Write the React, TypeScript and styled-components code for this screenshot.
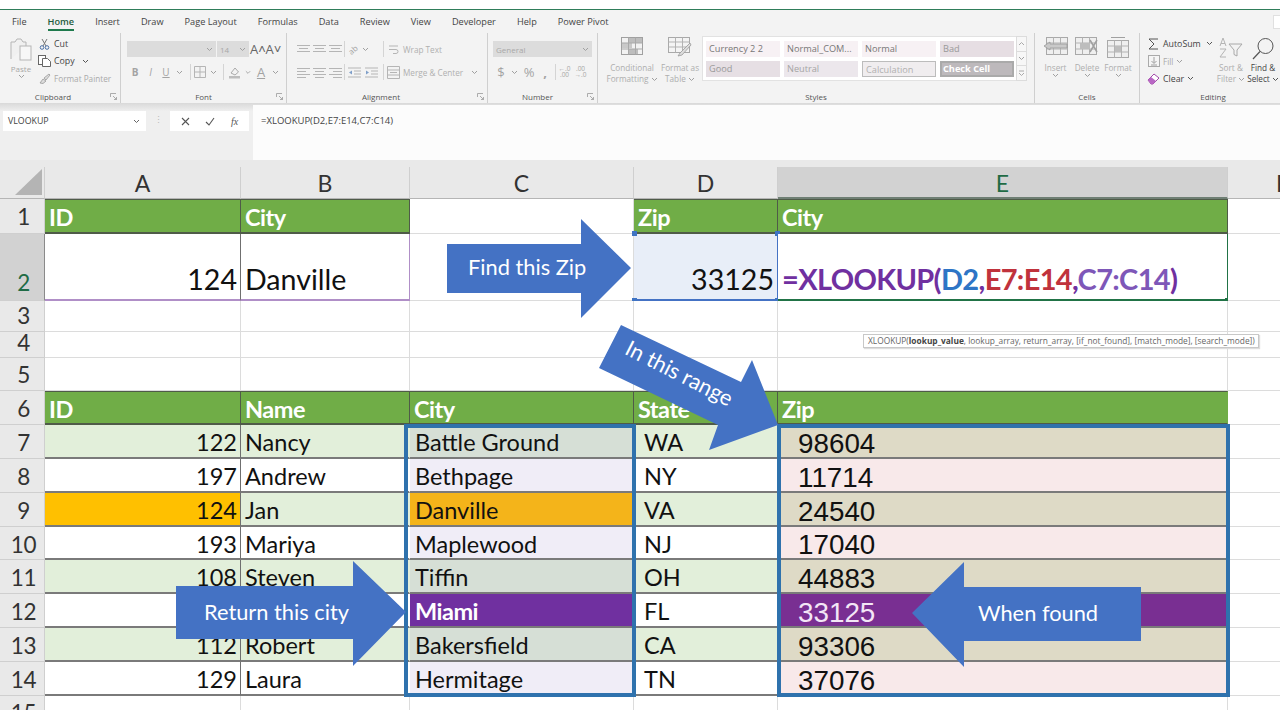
import React from "react";
import styled, { createGlobalStyle } from "styled-components";

const UI_FONT = `"Open Sans", "Liberation Sans", sans-serif`;
const SHEET_FONT = `Lato, "Liberation Sans", sans-serif`;
const ARIAL = `"Liberation Sans", Arial, sans-serif`;

const GlobalStyle = createGlobalStyle`
  html, body { margin: 0; padding: 0; background: #fff; }
  * { box-sizing: border-box; }
`;

const Page = styled.div`
  width: 1280px;
  height: 720px;
  overflow: hidden;
  background: #fff;
  font-family: ${UI_FONT};
`;

const TopStrip = styled.div`
  height: 9px;
  background: #fff;
  border-bottom: 1px solid #2f7d5a;
  box-sizing: content-box;
`;

/* ---------- ribbon ---------- */

const Ribbon = styled.div`
  height: 93px;
  background: #f3f3f3;
`;

const Tabs = styled.div`
  height: 23px;
  display: flex;
  align-items: center;
  gap: 21px;
  padding-left: 12px;
  font-size: 9.2px;
  color: #444;
`;

const Tab = styled.span<{ $active?: boolean }>`
  position: relative;
  color: ${(p) => (p.$active ? "#1f5c3d" : "#444")};
  font-weight: ${(p) => (p.$active ? 600 : 400)};
  &::after {
    content: "";
    display: ${(p) => (p.$active ? "block" : "none")};
    position: absolute;
    left: 0;
    right: 0;
    bottom: -3px;
    height: 2px;
    background: #1f7a4d;
  }
`;

const ShareStub = styled.span`
  margin-left: auto;
  width: 7px;
  height: 14px;
  background: #fff;
  border: 1px solid #e0e0e0;
  border-right: none;
`;

const Groups = styled.div`
  height: 70px;
  display: flex;
`;

const Group = styled.div<{ $w: number }>`
  width: ${(p) => p.$w}px;
  display: flex;
  flex-direction: column;
  border-right: 1px solid #cfcfcf;
  &:last-child { border-right: none; }
`;

const GroupBody = styled.div<{ $pad?: number }>`
  flex: 1;
  display: flex;
  padding-left: ${(p) => p.$pad ?? 0}px;
`;

const GroupLabel = styled.div<{ $shift?: number }>`
  position: relative;
  height: 13px;
  line-height: 13px;
  text-align: center;
  font-size: 8px;
  font-weight: 500;
  color: #555;
  padding-right: ${(p) => (p.$shift ?? 0) * 2}px;
  padding-left: ${(p) => (p.$shift ?? 0) < 0 ? (p.$shift ?? 0) * -2 : 0}px;
`;

const Launcher = styled.svg`
  position: absolute;
  right: 3px;
  top: 3px;
`;

const Rows = styled.div`
  display: flex;
  flex-direction: column;
  padding-top: 8px;
  gap: 7px;
`;

const ToolRow = styled.div`
  height: 16px;
  display: flex;
  align-items: center;
`;

const Slot = styled.span<{ $w: number; $dark?: boolean; $big?: boolean }>`
  width: ${(p) => p.$w}px;
  height: 16px;
  flex: none;
  display: flex;
  align-items: center;
  justify-content: center;
  font-size: ${(p) => (p.$big ? 13 : 10)}px;
  color: ${(p) => (p.$dark ? "#666" : "#a3a3a3")};
`;

const SlantText = styled.span`
  display: block;
  font-size: 8px;
  transform: rotate(-40deg);
  color: #a3a3a3;
`;

const DecimalText = styled.span`
  display: block;
  font-size: 6.5px;
  line-height: 6.5px;
  text-align: center;
  color: #a8a8a8;
  white-space: nowrap;
`;

const Sep = styled.span`
  width: 1px;
  height: 16px;
  flex: none;
  background: #d4d4d4;
`;

const Combo = styled.span<{ $w: number }>`
  width: ${(p) => p.$w}px;
  height: 16px;
  flex: none;
  display: flex;
  align-items: center;
  justify-content: space-between;
  padding: 0 3px;
  background: #dcdcdc;
  font-size: 8px;
  color: #a8a8a8;
  margin-right: 1px;
`;

const ToolText = styled.span`
  font-size: 8.2px;
  color: #b0b0b0;
  white-space: nowrap;
`;

const PasteCol = styled.div`
  width: 26px;
  margin: 4px 4px 0 8px;
  display: flex;
  flex-direction: column;
  align-items: center;
  font-size: 8px;
  line-height: 11px;
  color: #a8a8a8;
  svg:first-child { margin-bottom: 2px; }
`;

const SmallStack = styled.div`
  display: flex;
  flex-direction: column;
  padding-top: 2px;
  gap: 0.5px;
`;

const EditingStack = styled(SmallStack)`
  width: 68px;
  flex: none;
`;

const SmallTool = styled.div`
  height: 17px;
  display: flex;
  align-items: center;
  gap: 3px;
  font-size: 8.8px;
  color: #444;
`;

const SmallIcon = styled.span`
  width: 13px;
  flex: none;
  display: flex;
  justify-content: center;
`;

const Muted = styled.span`
  font-size: 8.2px;
  color: #aaa;
`;

const BigButton = styled.div<{ $w: number; $dark?: boolean }>`
  width: ${(p) => p.$w}px;
  flex: none;
  padding-top: 4px;
  display: flex;
  flex-direction: column;
  align-items: center;
  font-size: 8.2px;
  line-height: 11px;
  white-space: nowrap;
  color: ${(p) => (p.$dark ? "#444" : "#aeaeae")};
`;

const BigIcon = styled.div`
  height: 25px;
  display: flex;
  align-items: flex-start;
`;

const Gallery = styled.div`
  margin: 3px 0 0 2px;
  width: 314px;
  height: 45px;
  padding: 4px 3px;
  background: #fff;
  border: 1px solid #e2e2e2;
  border-right: none;
  display: grid;
  grid-template-columns: repeat(4, 74px);
  column-gap: 4px;
  row-gap: 4px;
  grid-auto-rows: 16px;
`;

const StyleCell = styled.div<{ $bg: string; $color?: string; $boxed?: boolean; $strong?: boolean }>`
  background: ${(p) => p.$bg};
  color: ${(p) => p.$color ?? "#8b8b8b"};
  border: ${(p) => (p.$boxed ? "1px solid #bcbcbc" : "none")};
  outline: ${(p) => (p.$strong ? "2px solid #aaa" : "none")};
  outline-offset: -2px;
  font-size: 9.2px;
  font-weight: ${(p) => (p.$strong ? 700 : 400)};
  line-height: 16px;
  padding-left: 3px;
  white-space: nowrap;
  overflow: hidden;
`;

const GalleryScroll = styled.div`
  margin-top: 3px;
  width: 11px;
  height: 45px;
  border: 1px solid #dcdcdc;
  background: #f7f7f7;
  display: flex;
  flex-direction: column;
`;

const ScrollStep = styled.span`
  flex: 1;
  display: flex;
  align-items: center;
  justify-content: center;
  border-bottom: 1px solid #dcdcdc;
  &:last-child { border-bottom: none; }
`;

/* ---------- formula bar ---------- */

const FormulaBar = styled.div`
  height: 57px;
  display: flex;
  align-items: flex-start;
  background: linear-gradient(#d9d9d9 0, #ececec 7px, #efefef 8px);
  padding-top: 8px;
`;

const NameBox = styled.div`
  margin-left: 3px;
  width: 143px;
  height: 20px;
  background: #fff;
  display: flex;
  align-items: center;
  justify-content: space-between;
  padding: 0 6px 0 5px;
  font-size: 8.8px;
  color: #444;
`;

const BarDots = styled.div`
  width: 24px;
  height: 20px;
  text-align: center;
  line-height: 18px;
  font-size: 9px;
  color: #bbb;
`;

const BarButtons = styled.div`
  width: 79px;
  height: 20px;
  background: #fff;
  display: flex;
  align-items: center;
  justify-content: space-around;
  padding: 0 3px;
  color: #555;
`;

const Fx = styled.span`
  font-family: "Liberation Serif", serif;
  font-style: italic;
  font-size: 10px;
  color: #555;
`;

const FormulaInput = styled.div`
  margin: -7px 0 0 4px;
  flex: 1;
  height: 56px;
  background: #fcfcfc;
  border-top: 1px solid #dedede;
  padding: 6px 0 0 8px;
  font-size: 9.5px;
  line-height: 20px;
  color: #444;
`;

/* ---------- sheet ---------- */

const Sheet = styled.div`
  position: relative;
  height: 550px;
  overflow: hidden;
  background: #fff;
  padding-top: 7px;
  font-family: ${SHEET_FONT};
  &::before {
    content: "";
    position: absolute;
    left: 0;
    right: 0;
    top: 0;
    height: 7px;
    background: #e9e9e9;
  }
`;

const Grid = styled.div`
  display: grid;
  width: 1338px;
  grid-template-columns: 45px 196px 169px 224px 144px 450px 110px;
  grid-template-rows: 32px 35px 67px 31px 26px 33px 34px 34px 34px 34px 33px 34px 34px 34px 34px;
`;

const Corner = styled.div`
  background: #e9e9e9;
  border-right: 1px solid #cfcfcf;
  border-bottom: 1px solid #b5b5b5;
  display: flex;
  align-items: flex-end;
  justify-content: flex-end;
  padding: 0 2px 3px 0;
`;

const ColHead = styled.div<{ $active?: boolean }>`
  background: ${(p) => (p.$active ? "#d2d2d2" : "#e9e9e9")};
  color: ${(p) => (p.$active ? "#1f6b45" : "#333")};
  border-right: 1px solid #cfcfcf;
  border-bottom: ${(p) => (p.$active ? "2px solid #6f7f74" : "1px solid #b5b5b5")};
  font-size: 23px;
  line-height: 32px;
  text-align: center;
`;

const RowHead = styled.div<{ $active?: boolean; $lift?: number }>`
  background: ${(p) => (p.$active ? "#d2d2d2" : "#e9e9e9")};
  color: ${(p) => (p.$active ? "#1f6b45" : "#333")};
  border-right: 1px solid ${(p) => (p.$active ? "#8a8a8a" : "#cfcfcf")};
  border-bottom: 1px solid #cfcfcf;
  font-size: 22.5px;
  letter-spacing: -0.4px;
  padding-left: 3px;
  padding-bottom: ${(p) => Math.max(p.$lift ?? 0, 0)}px;
  padding-top: ${(p) => Math.max(-(p.$lift ?? 0), 0)}px;
  display: flex;
  align-items: center;
  justify-content: center;
`;

const BottomRowHead = styled(RowHead)`
  align-items: flex-end;
  line-height: 34px;
`;

const Cell = styled.div<{
  $bg?: string;
  $color?: string;
  $right?: string;
  $bottom?: string;
  $top?: string;
  $end?: boolean;
  $bold?: boolean;
  $arial?: boolean;
  $pad?: number;
}>`
  position: relative;
  background: ${(p) => p.$bg ?? "#fff"};
  color: ${(p) => p.$color ?? "#111"};
  border-right: 1px solid ${(p) => p.$right ?? "#dcdcdc"};
  border-bottom: ${(p) => (p.$bottom ? `2px solid ${p.$bottom}` : "1px solid #dcdcdc")};
  border-top: ${(p) => (p.$top ? `1px solid ${p.$top}` : "none")};
  display: flex;
  align-items: center;
  justify-content: ${(p) => (p.$end ? "flex-end" : "flex-start")};
  padding: 2px ${(p) => (p.$end ? 3 : 4)}px 0 ${(p) => p.$pad ?? (p.$arial ? 20 : 4)}px;
  font-family: ${(p) => (p.$arial ? ARIAL : SHEET_FONT)};
  font-size: ${(p) => (p.$arial ? 27.8 : 23.5)}px;
  font-weight: ${(p) => (p.$bold ? 700 : 400)};
  letter-spacing: ${(p) => (p.$bold ? "-0.5px" : "0")};
  white-space: nowrap;
`;

const ZipCell = styled(Cell)`
  padding-top: 5px;
`;

const TallCell = styled(Cell)`
  align-items: flex-end;
  padding-top: 0;
  font-size: 28.6px;
  line-height: 40px;
`;

const FormulaText = styled.span`
  font-size: 29px;
  font-weight: 700;
  color: #7030a0;
  letter-spacing: -0.65px;
`;

const Ref = styled.span<{ $c: string }>`
  color: ${(p) => p.$c};
`;

const Handle = styled.i<{ $x: "l" | "r"; $y: "t" | "b" }>`
  position: absolute;
  width: 5px;
  height: 5px;
  background: #3f74c4;
  ${(p) => (p.$x === "l" ? "left: -2px;" : "right: -3px;")}
  ${(p) => (p.$y === "t" ? "top: -3px;" : "bottom: -4px;")}
`;

const FillHandle = styled(Handle)`
  background: #217346;
`;

const RangeBox = styled.div`
  position: absolute;
  top: 264px;
  height: 273px;
  border: 4px solid #2f72ad;
  pointer-events: none;
`;

const CityRange = styled(RangeBox)`
  left: 404px;
  width: 232px;
`;

const ZipRange = styled(RangeBox)`
  left: 777px;
  width: 453px;
`;

const Tooltip = styled.div`
  position: absolute;
  left: 863px;
  top: 174px;
  width: 396px;
  height: 14px;
  background: #fff;
  border: 1px solid #c8c8c8;
  box-shadow: 1px 1px 1px #ddd;
  padding-left: 4px;
  font-family: ${UI_FONT};
  font-size: 8.35px;
  line-height: 12px;
  color: #666;
  white-space: nowrap;
  b { color: #444; }
`;

const Arrow = styled.div`
  position: absolute;
  display: flex;
  align-items: center;
  background: #4472c4;
  color: #fff;
  font-size: 21.8px;
  white-space: nowrap;
`;

const FindArrow = styled(Arrow)`
  left: 447px;
  top: 59px;
  width: 184px;
  height: 99px;
  padding: 0 0 4px 21px;
  clip-path: polygon(0 25px, 134px 25px, 134px 0, 100% 49px, 134px 100%, 134px 74px, 0 74px);
`;

const RangeArrow = styled(Arrow)`
  left: 599px;
  top: 165px;
  width: 180px;
  height: 126px;
  clip-path: polygon(22px 0, 142px 57px, 153px 35px, 179px 100px, 110px 125px, 119px 100px, 0 43px);
`;

const RangeLabel = styled.span`
  position: absolute;
  left: 22px;
  top: 34px;
  transform: rotate(27deg);
`;

const ReturnArrow = styled(Arrow)`
  left: 176px;
  top: 401px;
  width: 230px;
  height: 105px;
  padding: 0 0 4px 28px;
  clip-path: polygon(0 25px, 177px 25px, 177px 0, 100% 51px, 177px 100%, 177px 78px, 0 78px);
`;

const FoundArrow = styled(Arrow)`
  left: 912px;
  top: 402px;
  width: 229px;
  height: 105px;
  padding: 0 0 4px 66px;
  clip-path: polygon(0 51px, 52px 0, 52px 25px, 100% 25px, 100% 79px, 52px 79px, 52px 100%);
`;

/* ---------- ribbon drawings ---------- */

const GREY = "#b5b5b5";

const Chevron = ({ color = "#a0a0a0" }: { color?: string }) => (
  <svg width="7" height="5" viewBox="0 0 7 5">
    <path d="M1 1l2.5 2.5L6 1" fill="none" stroke={color} />
  </svg>
);

const LauncherIcon = () => (
  <Launcher width="7" height="7" viewBox="0 0 7 7">
    <path d="M.5 4V.5H6M3 3l3.5 3.5M6.5 4v2.5H4" fill="none" stroke="#999" strokeWidth=".8" />
  </Launcher>
);

const Lines = ({ widths, aligned }: { widths: number[]; aligned: "l" | "c" | "r" }) => (
  <svg width="13" height="13" viewBox="0 0 13 13">
    {widths.map((w, i) => {
      const x = aligned === "l" ? 0 : aligned === "r" ? 13 - w : (13 - w) / 2;
      return <rect key={i} x={x} y={2 + i * 3} width={w} height="1" fill={GREY} />;
    })}
  </svg>
);

const PasteIcon = () => (
  <svg width="24" height="24" viewBox="0 0 24 24">
    <path d="M2 22V5h4l2-3h4l2 3h3v4" fill="#f0f0f0" stroke={GREY} />
    <rect x="11" y="9" width="11" height="14" fill="#f7f7f7" stroke={GREY} />
  </svg>
);

const CutIcon = () => (
  <svg width="11" height="12" viewBox="0 0 11 12">
    <path d="M3 1l4 7M8 1L4 8" stroke="#777" fill="none" />
    <circle cx="3" cy="9.500" r="1.800" fill="none" stroke="#4a6fa5" />
    <circle cx="8" cy="9.500" r="1.800" fill="none" stroke="#4a6fa5" />
  </svg>
);

const CopyIcon = () => (
  <svg width="13" height="12" viewBox="0 0 13 12">
    <rect x=".5" y=".5" width="7" height="9" fill="#fff" stroke="#666" />
    <path d="M4.500 3.500h5l3 3v5h-8z" fill="#fff" stroke="#666" />
  </svg>
);

const PainterIcon = () => (
  <svg width="12" height="11" viewBox="0 0 12 11">
    <path d="M1 10l3-4 3 2-3 2.500zM5 5l5-4 1 1-4 5z" fill="#ddd" stroke="#999" strokeWidth=".8" />
  </svg>
);

const BorderIcon = () => (
  <svg width="12" height="12" viewBox="0 0 12 12">
    <path d="M.5 .5h11v11H.5zM6 .5v11M.5 6h11" fill="none" stroke={GREY} />
  </svg>
);

const FillIcon = () => (
  <svg width="13" height="13" viewBox="0 0 13 13">
    <path d="M3 7l4-5 3.500 4-3.500 3z" fill="none" stroke="#aaa" />
    <rect x="1" y="10" width="11" height="2.500" fill="#bdbdbd" />
  </svg>
);

const WrapIcon = () => (
  <svg width="11" height="13" viewBox="0 0 11 13">
    <path d="M1 3h9M1 6.500h7a2 2 0 0 1 0 4H5" fill="none" stroke={GREY} />
  </svg>
);

const MergeIcon = () => (
  <svg width="13" height="13" viewBox="0 0 13 13">
    <path d="M.5 .5h12v12H.5zM.5 4h12M.5 9h12" fill="none" stroke={GREY} />
    <path d="M3 6.500h7" stroke={GREY} />
  </svg>
);

const IndentIcon = ({ flip }: { flip?: boolean }) => (
  <svg width="13" height="11" viewBox="0 0 13 11">
    <path d="M0 1h13M6 4h7M6 7h7M0 10h13" stroke={GREY} />
    <path d={flip ? "M1 3.500l3 2-3 2z" : "M4 3.500l-3 2 3 2z"} fill="#7f9fc9" />
  </svg>
);

const CondIcon = () => (
  <svg width="22" height="18" viewBox="0 0 22 18">
    <rect x=".5" y=".5" width="21" height="17" fill="#f2f2f2" stroke="#a0a0a0" />
    <rect x="7" y="1" width="14" height="5" fill="#bdbdbd" />
    <rect x="1" y="6" width="10" height="5" fill="#c9c9c9" />
    <rect x="7" y="12" width="10" height="5" fill="#bdbdbd" />
    <path d="M.5 6h21M.5 12h21M7.500 .5v17M14.500 .5v17" stroke="#a9a9a9" fill="none" />
  </svg>
);

const FormatTableIcon = () => (
  <svg width="24" height="20" viewBox="0 0 24 20">
    <rect x=".5" y=".5" width="21" height="15" fill="#f4f4f4" stroke="#a9a9a9" />
    <path d="M.5 5h21M.5 10h21M7.500 .5v15M14.500 .5v15" stroke="#b3b3b3" fill="none" />
    <path d="M22 6L12 16l-2 3 4-1L23 8z" fill="#ddd" stroke="#999" strokeWidth=".8" />
  </svg>
);

const TableLines = () => (
  <>
    <rect x=".5" y=".5" width="21" height="17" fill="#efefef" stroke="#a9a9a9" />
    <path d="M.5 6h21M.5 12h21M7.500 .5v17M14.500 .5v17" stroke="#b3b3b3" fill="none" />
  </>
);

const InsertCellsIcon = () => (
  <svg width="24" height="18" viewBox="0 0 24 18">
    <g transform="translate(2 0)"><TableLines /></g>
    <path d="M0 9l6-4v2h17v4H6v2z" fill="#c9c9c9" stroke="#9a9a9a" strokeWidth=".8" />
  </svg>
);

const DeleteCellsIcon = () => (
  <svg width="24" height="18" viewBox="0 0 24 18">
    <TableLines />
    <rect x="5" y="6" width="10" height="6" fill="#bdbdbd" />
    <path d="M15 3l7 12M22 3l-7 12" stroke="#a0a0a0" strokeWidth="1.500" />
  </svg>
);

const FormatCellsIcon = () => (
  <svg width="22" height="21" viewBox="0 0 22 21">
    <path d="M4 .5h14" stroke="#a0a0a0" />
    <g transform="translate(0 3)"><TableLines /><rect x="8" y="6" width="6" height="6" fill="#bdbdbd" /></g>
  </svg>
);

const SortFilterIcon = () => (
  <svg width="24" height="22" viewBox="0 0 24 22">
    <path d="M10 7h13l-5 6v6l-3-1.500V13z" fill="none" stroke="#a8a8a8" />
    <path d="M1 9l3-8 3 8M2 6.500h4M1 12h6l-6 8h6" fill="none" stroke="#b4b4b4" />
  </svg>
);

const SearchIcon = () => (
  <svg width="24" height="24" viewBox="0 0 24 24">
    <circle cx="14.500" cy="9" r="7.500" fill="none" stroke="#555" />
    <path d="M9 14.500L2 22" stroke="#555" strokeWidth="1.200" />
  </svg>
);

const SigmaIcon = () => (
  <svg width="11" height="12" viewBox="0 0 11 12">
    <path d="M10 1H1l5 5-5 5h9" fill="none" stroke="#555" />
  </svg>
);

const FillDownIcon = () => (
  <svg width="12" height="12" viewBox="0 0 12 12">
    <rect x=".5" y=".5" width="11" height="11" fill="#f5f5f5" stroke="#aaa" />
    <path d="M6 2v6M3.500 6L6 8.500 8.500 6M3 10h6" fill="none" stroke="#a0a0a0" />
  </svg>
);

const EraserIcon = () => (
  <svg width="13" height="12" viewBox="0 0 13 12">
    <path d="M1 7l6-6 5 4-6 6H4z" fill="#fff" stroke="#a24aa8" />
    <path d="M1 7l3-3 5 4-3 3H4z" fill="#b866c4" />
  </svg>
);

/* ---------- data ---------- */

const GREEN = "#70ad47";
const BAND = "#e2efda";
const RULE = "#7a7a7a";
const HEAD_RULE = "#4f5b48";

type Row = {
  id: string;
  name: string;
  city: string;
  state: string;
  zip: string;
};

const people: Row[] = [
  { id: "122", name: "Nancy", city: "Battle Ground", state: "WA", zip: "98604" },
  { id: "197", name: "Andrew", city: "Bethpage", state: "NY", zip: "11714" },
  { id: "124", name: "Jan", city: "Danville", state: "VA", zip: "24540" },
  { id: "193", name: "Mariya", city: "Maplewood", state: "NJ", zip: "17040" },
  { id: "108", name: "Steven", city: "Tiffin", state: "OH", zip: "44883" },
  { id: "", name: "", city: "Miami", state: "FL", zip: "33125" },
  { id: "112", name: "Robert", city: "Bakersfield", state: "CA", zip: "93306" },
  { id: "129", name: "Laura", city: "Hermitage", state: "TN", zip: "37076" },
];

const Header = ({ text, right = HEAD_RULE }: { text?: string; right?: string }) => (
  <Cell $bg={GREEN} $color="#fff" $bold $right={right} $bottom={HEAD_RULE} $top={HEAD_RULE}>
    {text}
  </Cell>
);

const Blank = ({ n }: { n: number }) => (
  <>
    {Array.from({ length: n }, (_, i) => (
      <Cell key={i} />
    ))}
  </>
);

const App = () => {
  return (
    <Page>
      <GlobalStyle />
      <TopStrip />
      <Ribbon>
        <Tabs>
          <Tab>File</Tab>
          <Tab $active>Home</Tab>
          <Tab>Insert</Tab>
          <Tab>Draw</Tab>
          <Tab>Page Layout</Tab>
          <Tab>Formulas</Tab>
          <Tab>Data</Tab>
          <Tab>Review</Tab>
          <Tab>View</Tab>
          <Tab>Developer</Tab>
          <Tab>Help</Tab>
          <Tab>Power Pivot</Tab>
          <ShareStub />
        </Tabs>
        <Groups>
          <Group $w={121}>
            <GroupBody>
              <PasteCol>
                <PasteIcon />
                <span>Paste</span>
                <Chevron />
              </PasteCol>
              <SmallStack>
                <SmallTool><SmallIcon><CutIcon /></SmallIcon>Cut</SmallTool>
                <SmallTool><SmallIcon><CopyIcon /></SmallIcon>Copy&nbsp;&nbsp;<Chevron color="#555" /></SmallTool>
                <SmallTool><SmallIcon><PainterIcon /></SmallIcon><Muted>Format Painter</Muted></SmallTool>
              </SmallStack>
            </GroupBody>
            <GroupLabel $shift={7}>Clipboard<LauncherIcon /></GroupLabel>
          </Group>

          <Group $w={166}>
            <GroupBody $pad={6}>
              <Rows>
                <ToolRow>
                  <Combo $w={89}><span /><Chevron /></Combo>
                  <Combo $w={32}>14<Chevron /></Combo>
                  <Slot $w={16} $dark $big>A˄</Slot>
                  <Slot $w={15} $dark $big>A˅</Slot>
                </ToolRow>
                <ToolRow>
                  <Slot $w={16}><b>B</b></Slot>
                  <Slot $w={15}><i>I</i></Slot>
                  <Slot $w={16}><u>U</u></Slot>
                  <Slot $w={10}><Chevron /></Slot>
                  <Slot $w={6} />
                  <Sep />
                  <Slot $w={18}><BorderIcon /></Slot>
                  <Slot $w={9}><Chevron /></Slot>
                  <Slot $w={5} />
                  <Sep />
                  <Slot $w={21}><FillIcon /></Slot>
                  <Slot $w={6}><Chevron /></Slot>
                  <Slot $w={20} $big><u>A</u></Slot>
                  <Slot $w={8}><Chevron /></Slot>
                </ToolRow>
              </Rows>
            </GroupBody>
            <GroupLabel>Font<LauncherIcon /></GroupLabel>
          </Group>

          <Group $w={201}>
            <GroupBody $pad={8}>
              <Rows>
                <ToolRow>
                  <Slot $w={16}><Lines aligned="c" widths={[13, 9, 13]} /></Slot>
                  <Slot $w={16}><Lines aligned="c" widths={[13, 9, 13]} /></Slot>
                  <Slot $w={16}><Lines aligned="c" widths={[13, 9, 13]} /></Slot>
                  <Slot $w={1} />
                  <Sep />
                  <Slot $w={16}><SlantText>ab</SlantText></Slot>
                  <Slot $w={8}><Chevron /></Slot>
                  <Slot $w={14} />
                  <Sep />
                  <Slot $w={19}><WrapIcon /></Slot>
                  <ToolText>Wrap Text</ToolText>
                </ToolRow>
                <ToolRow>
                  <Slot $w={16}><Lines aligned="l" widths={[13, 9, 13, 9]} /></Slot>
                  <Slot $w={16}><Lines aligned="c" widths={[13, 9, 13, 9]} /></Slot>
                  <Slot $w={16}><Lines aligned="r" widths={[13, 9, 13, 9]} /></Slot>
                  <Slot $w={1} />
                  <Sep />
                  <Slot $w={18}><IndentIcon /></Slot>
                  <Slot $w={17}><IndentIcon flip /></Slot>
                  <Slot $w={3} />
                  <Sep />
                  <Slot $w={19}><MergeIcon /></Slot>
                  <ToolText>Merge &amp; Center</ToolText>
                  <Slot $w={22}><Chevron /></Slot>
                </ToolRow>
              </Rows>
            </GroupBody>
            <GroupLabel $shift={6}>Alignment<LauncherIcon /></GroupLabel>
          </Group>

          <Group $w={110}>
            <GroupBody $pad={5}>
              <Rows>
                <ToolRow>
                  <Combo $w={99}>General<Chevron /></Combo>
                </ToolRow>
                <ToolRow>
                  <Slot $w={16} $big>$</Slot>
                  <Slot $w={10}><Chevron /></Slot>
                  <Slot $w={20} $big>%</Slot>
                  <Slot $w={12} $big><b>,</b></Slot>
                  <Slot $w={4} />
                  <Sep />
                  <Slot $w={17}><DecimalText>←.0<br />.00</DecimalText></Slot>
                  <Slot $w={15}><DecimalText>.00<br />→.0</DecimalText></Slot>
                </ToolRow>
              </Rows>
            </GroupBody>
            <GroupLabel $shift={5}>Number<LauncherIcon /></GroupLabel>
          </Group>

          <Group $w={437}>
            <GroupBody $pad={6}>
              <BigButton $w={56}>
                <BigIcon><CondIcon /></BigIcon>
                <span>Conditional</span>
                <span>Formatting <Chevron /></span>
              </BigButton>
              <BigButton $w={40}>
                <BigIcon><FormatTableIcon /></BigIcon>
                <span>Format as</span>
                <span>Table <Chevron /></span>
              </BigButton>
              <Gallery>
                <StyleCell $bg="#f7f1f4" $color="#777">Currency 2 2</StyleCell>
                <StyleCell $bg="#f7f1f4" $color="#777">Normal_COM...</StyleCell>
                <StyleCell $bg="#f7f1f4" $color="#777">Normal</StyleCell>
                <StyleCell $bg="#e6dee3" $color="#999">Bad</StyleCell>
                <StyleCell $bg="#e6dfe4" $color="#999">Good</StyleCell>
                <StyleCell $bg="#ece7ec" $color="#a5a5a5">Neutral</StyleCell>
                <StyleCell $bg="#f0edef" $color="#b0b0b0" $boxed>Calculation</StyleCell>
                <StyleCell $bg="#bdb9bc" $color="#fff" $strong>Check Cell</StyleCell>
              </Gallery>
              <GalleryScroll>
                <ScrollStep>
                  <svg width="7" height="5" viewBox="0 0 7 5"><path d="M1 4l2.500-2.500L6 4" fill="none" stroke="#aaa" /></svg>
                </ScrollStep>
                <ScrollStep><Chevron /></ScrollStep>
                <ScrollStep>
                  <svg width="7" height="7" viewBox="0 0 7 7"><path d="M1 1h5M1 3l2.500 2.500L6 3" fill="none" stroke="#aaa" /></svg>
                </ScrollStep>
              </GalleryScroll>
            </GroupBody>
            <GroupLabel>Styles</GroupLabel>
          </Group>

          <Group $w={105}>
            <GroupBody $pad={5}>
              <BigButton $w={31}>
                <BigIcon><InsertCellsIcon /></BigIcon>
                <span>Insert</span>
                <Chevron />
              </BigButton>
              <BigButton $w={32}>
                <BigIcon><DeleteCellsIcon /></BigIcon>
                <span>Delete</span>
                <Chevron />
              </BigButton>
              <BigButton $w={30}>
                <BigIcon><FormatCellsIcon /></BigIcon>
                <span>Format</span>
                <Chevron />
              </BigButton>
            </GroupBody>
            <GroupLabel>Cells</GroupLabel>
          </Group>

          <Group $w={140}>
            <GroupBody $pad={7}>
              <EditingStack>
                <SmallTool><SmallIcon><SigmaIcon /></SmallIcon>AutoSum&nbsp;<Chevron color="#555" /></SmallTool>
                <SmallTool><SmallIcon><FillDownIcon /></SmallIcon><Muted>Fill</Muted><Chevron /></SmallTool>
                <SmallTool><SmallIcon><EraserIcon /></SmallIcon>Clear<Chevron color="#555" /></SmallTool>
              </EditingStack>
              <BigButton $w={32}>
                <BigIcon><SortFilterIcon /></BigIcon>
                <span>Sort &amp;</span>
                <span>Filter <Chevron /></span>
              </BigButton>
              <BigButton $w={32} $dark>
                <BigIcon><SearchIcon /></BigIcon>
                <span>Find &amp;</span>
                <span>Select <Chevron color="#555" /></span>
              </BigButton>
            </GroupBody>
            <GroupLabel $shift={-3}>Editing</GroupLabel>
          </Group>
        </Groups>
      </Ribbon>

      <FormulaBar>
        <NameBox>VLOOKUP<Chevron color="#666" /></NameBox>
        <BarDots>⋮</BarDots>
        <BarButtons>
          <svg width="9" height="9" viewBox="0 0 9 9">
            <path d="M1 1l7 7M8 1L1 8" stroke="#555" strokeWidth="1.100" />
          </svg>
          <svg width="10" height="9" viewBox="0 0 10 9">
            <path d="M1 5l3 3 5-7" stroke="#555" strokeWidth="1.100" fill="none" />
          </svg>
          <Fx>fx</Fx>
        </BarButtons>
        <FormulaInput>=XLOOKUP(D2,E7:E14,C7:C14)</FormulaInput>
      </FormulaBar>

      <Sheet>
        <Grid>
          <Corner>
            <svg width="27" height="26" viewBox="0 0 27 26">
              <path d="M27 0v26H0z" fill="#b4b4b4" />
            </svg>
          </Corner>
          <ColHead>A</ColHead>
          <ColHead>B</ColHead>
          <ColHead>C</ColHead>
          <ColHead>D</ColHead>
          <ColHead $active>E</ColHead>
          <ColHead>F</ColHead>

          <RowHead>1</RowHead>
          <Header text="ID" />
          <Header text="City" />
          <Cell />
          <Header text="Zip" />
          <Header text="City" />
          <Cell />

          <BottomRowHead $active>2</BottomRowHead>
          <TallCell $end $right="#6f6f6f" $bottom="#b08fc7">124</TallCell>
          <TallCell $right="#b08fc7" $bottom="#b08fc7">Danville</TallCell>
          <Cell />
          <TallCell $end $bg="#e8eef8" $right="#4472c4" $bottom="#4472c4">
            33125
            <Handle $x="l" $y="t" />
            <Handle $x="r" $y="t" />
            <Handle $x="l" $y="b" />
            <Handle $x="r" $y="b" />
          </TallCell>
          <TallCell $right="#217346" $bottom="#217346">
            <FormulaText>
              =XLOOKUP(<Ref $c="#2e75c6">D2</Ref>,<Ref $c="#c0323c">E7:E14</Ref>,
              <Ref $c="#7e57b8">C7:C14</Ref>)
            </FormulaText>
            <FillHandle $x="r" $y="b" />
          </TallCell>
          <Cell />

          <RowHead $lift={1}>3</RowHead>
          <Blank n={6} />
          <RowHead $lift={5}>4</RowHead>
          <Blank n={6} />
          <RowHead $lift={-1}>5</RowHead>
          <Blank n={6} />

          <RowHead $lift={-1}>6</RowHead>
          <Header text="ID" />
          <Header text="Name" />
          <Header text="City" />
          <Header text="State" />
          <Header text="Zip" right="#70ad47" />
          <Cell />

          {people.map((p, i) => {
            const odd = i % 2 === 0;
            const isJan = p.name === "Jan";
            const isMiami = p.city === "Miami";
            const band = odd ? BAND : "#fff";
            return (
              <React.Fragment key={p.zip}>
                <RowHead $lift={-2}>{i + 7}</RowHead>
                <Cell $end $bg={isJan ? "#ffc000" : band} $right="#6f6f6f" $bottom={RULE}>{p.id}</Cell>
                <Cell $bg={band} $bottom={RULE} $right={band}>{p.name}</Cell>
                <Cell
                  $bg={isJan ? "#f4b41a" : isMiami ? "#7030a0" : odd ? "#d6dfd6" : "#f0edf7"}
                  $color={isMiami ? "#fff" : undefined}
                  $bold={isMiami}
                  $bottom={RULE}
                  $right="#7a7a7a"
                  $pad={5}
                >
                  {p.city}
                </Cell>
                <Cell $bg={band} $bottom={RULE} $pad={10}>{p.state}</Cell>
                <ZipCell
                  $arial
                  $bg={isMiami ? "#792f92" : odd ? "#dedac6" : "#f8e9ea"}
                  $color={isMiami ? "#f3e6f6" : undefined}
                  $bottom={RULE}
                >
                  {p.zip}
                </ZipCell>
                <Cell />
              </React.Fragment>
            );
          })}

          <BottomRowHead>15</BottomRowHead>
          <Blank n={6} />
        </Grid>

        <CityRange />
        <ZipRange />
        <Tooltip>
          XLOOKUP(<b>lookup_value</b>, lookup_array, return_array, [if_not_found], [match_mode], [search_mode])
        </Tooltip>
        <FindArrow>Find this Zip</FindArrow>
        <RangeArrow><RangeLabel>In this range</RangeLabel></RangeArrow>
        <ReturnArrow>Return this city</ReturnArrow>
        <FoundArrow>When found</FoundArrow>
      </Sheet>
    </Page>
  );
};

export default App;
